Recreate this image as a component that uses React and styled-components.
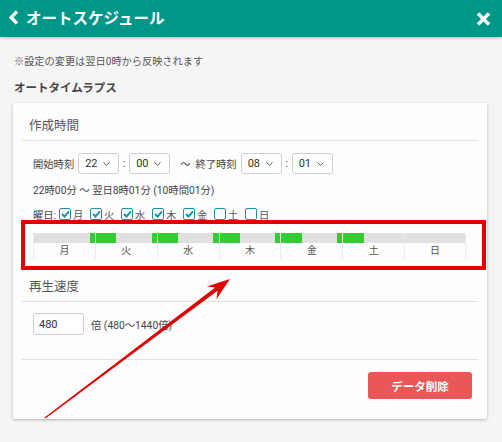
import React from "react";
import styled, { createGlobalStyle } from "styled-components";

const GlobalStyle = createGlobalStyle`
  html, body {
    margin: 0;
    padding: 0;
  }
  body {
    background: #f5f5f5;
    font-family: Roboto, "Noto Sans CJK JP", sans-serif;
    color: #444;
  }
`;

const DAYS = ["月", "火", "水", "木", "金", "土", "日"];
const CHECKED = [true, true, true, true, true, false, false];
const START = 22;
const END = 8 + 1 / 60;

// green parts of one day cell, in percent of the day
const segmentsFor = (i) => {
  const segs = [];
  if (i > 0 && CHECKED[i - 1]) segs.push({ left: 0, width: (END / 24) * 100 });
  if (CHECKED[i]) segs.push({ left: (START / 24) * 100, width: ((24 - START) / 24) * 100 });
  return segs;
};

const Page = styled.div`
  position: relative;
  min-height: 442px;
  overflow: hidden;
`;

const Header = styled.header`
  height: 37px;
  background: #009688;
  display: flex;
  align-items: center;
  justify-content: space-between;
  padding: 0 11px 0 8px;
  box-shadow: 0 1px 3px rgba(0, 0, 0, 0.25);
  color: #fff;
`;

const HeaderTitle = styled.div`
  display: flex;
  align-items: center;
  gap: 7px;
  font-size: 15.5px;
  font-weight: 700;
  margin-top: -3px;
`;

const Main = styled.main`
  padding: 0 15px 0 13px;
`;

const Notice = styled.p`
  margin: 18px 0 0 1px;
  font-size: 10.2px;
  line-height: 14px;
  color: #555;
`;

const Heading = styled.h2`
  margin: 12px 0 0 1px;
  font-size: 11.5px;
  line-height: 14px;
  font-weight: 700;
  color: #444;
`;

const Card = styled.section`
  margin-top: 8px;
  background: #fdfdfd;
  border-radius: 2px;
  box-shadow: 0 1px 3px rgba(0, 0, 0, 0.28);
  padding: 0 9px 20px;
`;

const SectionTitle = styled.h3`
  margin: 0;
  padding: 15px 7px 7px;
  font-size: 12.5px;
  line-height: 15px;
  font-weight: 400;
  color: #555;
  border-bottom: 1px solid #e2e2e2;
`;

const SectionBody = styled.div`
  padding: ${(p) => p.$pad || "12px 11px 5px"};
  border-bottom: ${(p) => (p.$line ? "1px solid #e2e2e2" : "none")};
  font-size: 10.3px;
  color: #444;
`;

const Row = styled.div`
  display: flex;
  align-items: center;
  height: ${(p) => p.$h || "14px"};
  margin-top: ${(p) => p.$mt || "0"};
`;

const Label = styled.span`
  margin: ${(p) => p.$m || "0"};
  white-space: nowrap;
`;

const SelectBox = styled.div`
  box-sizing: border-box;
  width: 41px;
  height: 21px;
  border: 1px solid #cfcfcf;
  border-radius: 3px;
  background: #fff;
  display: flex;
  align-items: center;
  justify-content: space-between;
  padding: 0 8px 0 6px;
  font-size: 11px;
  color: #333;
`;

const Colon = styled.span`
  width: 10px;
  text-align: center;
`;

const Check = styled.span`
  box-sizing: border-box;
  width: 12px;
  height: 12px;
  border: 1.5px solid #1b95a0;
  border-radius: 2px;
  background: #fff;
  display: inline-flex;
  align-items: center;
  justify-content: center;
  margin: 0 2px 0 ${(p) => p.$ml || "5px"};
`;

const DayLabel = styled.span`
  width: 13px;
  color: #555;
`;

const TimelineWrap = styled.div`
  position: relative;
  margin-top: 12px;
`;

const Highlight = styled.div`
  position: absolute;
  left: -12px;
  top: -13px;
  right: -19px;
  bottom: -11px;
  border: 4px solid #e00000;
  border-radius: 1px;
  pointer-events: none;
`;

const Timeline = styled.div`
  display: grid;
  grid-template-columns: repeat(7, 1fr);
  width: 433px;
`;

const DayCell = styled.div`
  border-left: 1px solid #ececec;
  &:last-child {
    border-right: 1px solid #ececec;
  }
`;

const Bar = styled.div`
  position: relative;
  height: 10px;
  background: #e0e0e0;
`;

const Green = styled.div`
  position: absolute;
  top: 0;
  bottom: 0;
  background: #33cc33;
`;

const CellLabel = styled.div`
  height: 16px;
  line-height: 16px;
  text-align: center;
  font-size: 10px;
  color: #555;
`;

const NumInput = styled.div`
  box-sizing: border-box;
  width: 51px;
  height: 22px;
  border: 1px solid #cfcfcf;
  border-radius: 3px;
  background: #fff;
  padding-left: 5px;
  display: flex;
  align-items: center;
  font-size: 11px;
  color: #333;
`;

const Footer = styled.div`
  display: flex;
  justify-content: flex-end;
  padding: 12px 6px 0 0;
`;

const DangerButton = styled.button`
  width: 104px;
  height: 27px;
  border: none;
  border-radius: 3px;
  background: #e95759;
  color: #fff;
  font-family: inherit;
  font-size: 11.5px;
  font-weight: 700;
`;

const Overlay = styled.svg`
  position: absolute;
  left: 0;
  top: 0;
  pointer-events: none;
`;

const Chevron = () => (
  <svg width="11" height="15" viewBox="0 0 11 15">
    <polyline points="9,1.5 3,7.5 9,13.5" fill="none" stroke="#fff" strokeWidth="3.2" />
  </svg>
);

const Close = () => (
  <svg width="15" height="14" viewBox="0 0 15 14">
    <path d="M2 1.5 L13 12.5 M13 1.5 L2 12.5" stroke="#fff" strokeWidth="3.4" />
  </svg>
);

const Caret = () => (
  <svg width="7" height="4" viewBox="0 0 7 4">
    <polyline points="0.5,0.5 3.5,3.3 6.5,0.5" fill="none" stroke="#555" strokeWidth="1" />
  </svg>
);

const Tick = () => (
  <svg width="9" height="8" viewBox="0 0 9 8">
    <polyline points="1,4 3.5,6.5 8,1.3" fill="none" stroke="#1b95a0" strokeWidth="2" />
  </svg>
);

const Select = ({ value }) => (
  <SelectBox>
    <span>{value}</span>
    <Caret />
  </SelectBox>
);

const App = () => {
  return (
    <Page>
      <GlobalStyle />
      <Header>
        <HeaderTitle>
          <Chevron />
          オートスケジュール
        </HeaderTitle>
        <Close />
      </Header>
      <Main>
        <Notice>※設定の変更は翌日0時から反映されます</Notice>
        <Heading>オートタイムラプス</Heading>
        <Card>
          <SectionTitle>作成時間</SectionTitle>
          <SectionBody>
            <Row $h="21px">
              <Label $m="0 4px 0 0">開始時刻</Label>
              <Select value="22" />
              <Colon>:</Colon>
              <Select value="00" />
              <Label $m="0 5px 0 10px">〜</Label>
              <Label $m="0 4px 0 0">終了時刻</Label>
              <Select value="08" />
              <Colon>:</Colon>
              <Select value="01" />
            </Row>
            <Row $mt="8px">22時00分 〜 翌日8時01分 (10時間01分)</Row>
            <Row $mt="11px">
              <Label>曜日:</Label>
              {DAYS.map((d, i) => (
                <React.Fragment key={d}>
                  <Check $ml={i === 0 ? "3px" : "4px"}>{CHECKED[i] && <Tick />}</Check>
                  <DayLabel>{d}</DayLabel>
                </React.Fragment>
              ))}
            </Row>
            <TimelineWrap>
              <Timeline>
                {DAYS.map((d, i) => (
                  <DayCell key={d}>
                    <Bar>
                      {segmentsFor(i).map((s, k) => (
                        <Green key={k} style={{ left: `${s.left}%`, width: `${s.width}%` }} />
                      ))}
                    </Bar>
                    <CellLabel>{d}</CellLabel>
                  </DayCell>
                ))}
              </Timeline>
              <Highlight />
            </TimelineWrap>
          </SectionBody>
          <SectionTitle>再生速度</SectionTitle>
          <SectionBody $pad="11px 11px 24px" $line>
            <Row $h="22px">
              <NumInput>480</NumInput>
              <Label $m="0 0 0 7px">倍 (480〜1440倍)</Label>
            </Row>
          </SectionBody>
          <Footer>
            <DangerButton>データ削除</DangerButton>
          </Footer>
        </Card>
      </Main>
      <Overlay width="502" height="442" viewBox="0 0 502 442">
        <polygon
          points="45.4,418.4 217.6,290.8 216.4,299.2 230,279 206.8,286.4 215.2,287.6 44.6,417.6"
          fill="#e00000"
        />
      </Overlay>
    </Page>
  );
};

export default App;
